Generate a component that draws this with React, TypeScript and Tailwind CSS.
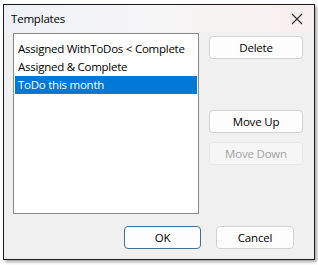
import React from 'react';

const items = ['Assigned WithToDos < Complete', 'Assigned & Complete', 'ToDo this month'];

function Btn({ label, disabled, primary }: { label: string; disabled?: boolean; primary?: boolean }) {
  const base = 'h-[23px] rounded-[4px] border text-[11.5px] tracking-[-0.2px] leading-none flex items-center justify-center';
  const look = disabled
    ? 'border-[#e8e8e8] bg-[#f5f5f5] text-[#a3a3a3]'
    : primary
      ? 'border-[#4a6c8c] bg-[#fdfdfd] text-black'
      : 'border-[#d4d4d4] bg-[#fdfdfd] text-black';
  return <div className={`${base} ${look}`}>{label}</div>;
}

export default function App() {
  return (
    <div className="w-[318px] h-[265px] bg-white pl-[3px] pt-[4px]" style={{ fontFamily: '"Open Sans", "Noto Sans", sans-serif' }}>
      <div className="w-[312px] h-[256px] border border-[#1c1c1c] bg-[#f0f0f0] flex flex-col shadow-[2px_2px_3px_rgba(0,0,0,0.35)]">
        {/* title bar */}
        <div className="h-[27px] flex items-center justify-between pl-[7px] pr-[9px] bg-gradient-to-r from-[#eef1f7] via-[#f6f5f6] to-[#f8efee]">
          <span className="text-[11.5px] tracking-[-0.2px] text-black">Templates</span>
          <svg width="12" height="12" viewBox="0 0 12 12" className="mr-[2px]">
            <path d="M1 1 L11 11 M11 1 L1 11" stroke="#333" strokeWidth="1.2" />
          </svg>
        </div>

        {/* body */}
        <div className="flex-1 flex flex-col px-[9px] pt-[1px]">
          <div className="flex gap-[10px]">
            <div className="w-[186px] h-[181px] border border-[#8a8a8a] bg-white p-[1px] pt-[6px]">
              {items.map((t, i) => (
                <div
                  key={t}
                  className={`h-[18px] pl-[3px] text-[11.5px] tracking-[-0.25px] leading-[18px] whitespace-nowrap ${i === 2 ? 'bg-[#0078d7] text-white' : 'text-black'}`}
                >
                  {t}
                </div>
              ))}
            </div>
            <div className="w-[94px] flex flex-col pt-[3px]">
              <Btn label="Delete" />
              <div className="h-[51px]" />
              <Btn label="Move Up" />
              <div className="h-[9px]" />
              <Btn label="Move Down" disabled />
            </div>
          </div>
          <div className="flex justify-end gap-[15px] mt-[12px] pr-[11px]">
            <div className="w-[77px]">
              <Btn label="OK" primary />
            </div>
            <div className="w-[78px]">
              <Btn label="Cancel" />
            </div>
          </div>
        </div>
      </div>
    </div>
  );
}
